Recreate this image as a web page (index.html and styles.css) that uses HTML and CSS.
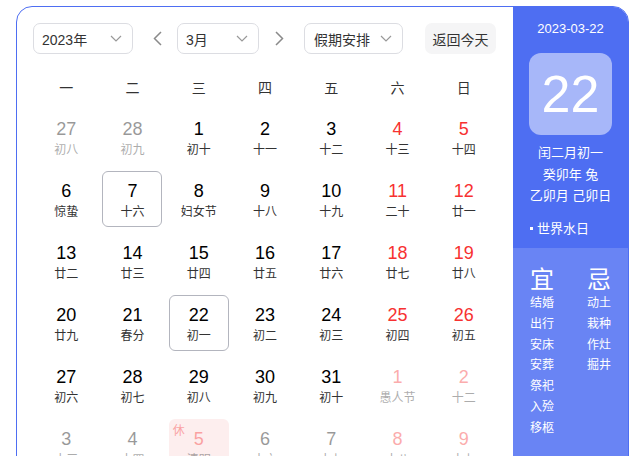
FILE: index.html
```html
<!DOCTYPE html>
<html lang="zh-CN">
<head>
<meta charset="utf-8">
<title>万年历</title>
<link rel="stylesheet" href="styles.css">
</head>
<body>
<div class="calendar">
  <div class="main">
    <div class="toolbar">
      <div class="select year"><span>2023年</span><svg class="chev" width="12" height="7" viewBox="0 0 12 7"><path d="M1 1l5 5 5-5"/></svg></div>
      <button class="arrow prev"><svg width="9" height="15" viewBox="0 0 9 15"><path d="M8 1L1.5 7.5 8 14"/></svg></button>
      <div class="select month"><span>3月</span><svg class="chev" width="12" height="7" viewBox="0 0 12 7"><path d="M1 1l5 5 5-5"/></svg></div>
      <button class="arrow next"><svg width="9" height="15" viewBox="0 0 9 15"><path d="M1 1l6.5 6.5L1 14"/></svg></button>
      <div class="select holiday"><span>假期安排</span><svg class="chev" width="12" height="7" viewBox="0 0 12 7"><path d="M1 1l5 5 5-5"/></svg></div>
      <button class="today-btn">返回今天</button>
    </div>
    <div class="weekdays">
      <span>一</span><span>二</span><span>三</span><span>四</span><span>五</span><span>六</span><span>日</span>
    </div>
    <div class="days">
      <div class="day out"><span class="num">27</span><span class="lunar">初八</span></div>
      <div class="day out"><span class="num">28</span><span class="lunar">初九</span></div>
      <div class="day"><span class="num">1</span><span class="lunar">初十</span></div>
      <div class="day"><span class="num">2</span><span class="lunar">十一</span></div>
      <div class="day"><span class="num">3</span><span class="lunar">十二</span></div>
      <div class="day weekend"><span class="num">4</span><span class="lunar">十三</span></div>
      <div class="day weekend"><span class="num">5</span><span class="lunar">十四</span></div>

      <div class="day"><span class="num">6</span><span class="lunar">惊蛰</span></div>
      <div class="day selected"><span class="num">7</span><span class="lunar">十六</span></div>
      <div class="day"><span class="num">8</span><span class="lunar">妇女节</span></div>
      <div class="day"><span class="num">9</span><span class="lunar">十八</span></div>
      <div class="day"><span class="num">10</span><span class="lunar">十九</span></div>
      <div class="day weekend"><span class="num">11</span><span class="lunar">二十</span></div>
      <div class="day weekend"><span class="num">12</span><span class="lunar">廿一</span></div>

      <div class="day"><span class="num">13</span><span class="lunar">廿二</span></div>
      <div class="day"><span class="num">14</span><span class="lunar">廿三</span></div>
      <div class="day"><span class="num">15</span><span class="lunar">廿四</span></div>
      <div class="day"><span class="num">16</span><span class="lunar">廿五</span></div>
      <div class="day"><span class="num">17</span><span class="lunar">廿六</span></div>
      <div class="day weekend"><span class="num">18</span><span class="lunar">廿七</span></div>
      <div class="day weekend"><span class="num">19</span><span class="lunar">廿八</span></div>

      <div class="day"><span class="num">20</span><span class="lunar">廿九</span></div>
      <div class="day"><span class="num">21</span><span class="lunar">春分</span></div>
      <div class="day selected"><span class="num">22</span><span class="lunar">初一</span></div>
      <div class="day"><span class="num">23</span><span class="lunar">初二</span></div>
      <div class="day"><span class="num">24</span><span class="lunar">初三</span></div>
      <div class="day weekend"><span class="num">25</span><span class="lunar">初四</span></div>
      <div class="day weekend"><span class="num">26</span><span class="lunar">初五</span></div>

      <div class="day"><span class="num">27</span><span class="lunar">初六</span></div>
      <div class="day"><span class="num">28</span><span class="lunar">初七</span></div>
      <div class="day"><span class="num">29</span><span class="lunar">初八</span></div>
      <div class="day"><span class="num">30</span><span class="lunar">初九</span></div>
      <div class="day"><span class="num">31</span><span class="lunar">初十</span></div>
      <div class="day out weekend"><span class="num">1</span><span class="lunar">愚人节</span></div>
      <div class="day out weekend"><span class="num">2</span><span class="lunar">十二</span></div>

      <div class="day out"><span class="num">3</span><span class="lunar">十三</span></div>
      <div class="day out"><span class="num">4</span><span class="lunar">十四</span></div>
      <div class="day out weekend rest"><span class="tag">休</span><span class="num">5</span><span class="lunar">清明</span></div>
      <div class="day out"><span class="num">6</span><span class="lunar">十六</span></div>
      <div class="day out"><span class="num">7</span><span class="lunar">十七</span></div>
      <div class="day out weekend"><span class="num">8</span><span class="lunar">十八</span></div>
      <div class="day out weekend"><span class="num">9</span><span class="lunar">十九</span></div>
    </div>
  </div>
  <aside class="side">
    <div class="side-top">
      <div class="side-date">2023-03-22</div>
      <div class="big-day">22</div>
      <div class="lunar-info">
        <div>闰二月初一</div>
        <div>癸卯年 兔</div>
        <div>乙卯月 己卯日</div>
      </div>
      <div class="festival">世界水日</div>
    </div>
    <div class="side-bottom">
      <div class="col">
        <div class="col-head">宜</div>
        <div>结婚</div><div>出行</div><div>安床</div><div>安葬</div><div>祭祀</div><div>入殓</div><div>移柩</div>
      </div>
      <div class="col">
        <div class="col-head">忌</div>
        <div>动土</div><div>栽种</div><div>作灶</div><div>掘井</div>
      </div>
    </div>
  </aside>
</div>
</body>
</html>
```

FILE: styles.css
```css
html, body {
  margin: 0;
  padding: 0;
  overflow: hidden;
  background: #fff;
}
body {
  font-family: "Liberation Sans", "Noto Sans CJK SC", sans-serif;
  color: #333;
}
.calendar {
  margin: 6px 0 0 16px;
  width: 611px;
  height: 500px;
  border: 1px solid #4e6ef2;
  border-radius: 16px;
  overflow: hidden;
  display: flex;
  box-sizing: content-box;
}
.main {
  width: 464px;
  padding: 16px 16px 0 16px;
  flex: none;
}
.toolbar {
  display: flex;
  align-items: center;
  height: 31px;
}
.select {
  box-sizing: border-box;
  height: 31px;
  border: 1px solid #dcdde2;
  border-radius: 7px;
  display: flex;
  align-items: center;
  justify-content: space-between;
  padding: 0 10px 0 8px;
  font-size: 14px;
  color: #333;
  flex: none;
}
.select.year { width: 100px; }
.select.month { width: 82px; }
.select.holiday { width: 99px; padding-left: 9px; }
.chev path {
  fill: none;
  stroke: #999;
  stroke-width: 1.2;
}
.arrow {
  flex: none;
  border: 0;
  background: none;
  padding: 0;
  height: 31px;
  display: flex;
  align-items: center;
}
.arrow path {
  fill: none;
  stroke: #8a8a8a;
  stroke-width: 1.5;
}
.arrow.prev { width: 44px; justify-content: flex-end; padding-right: 15px; box-sizing: border-box; }
.arrow.next { width: 45px; justify-content: flex-start; padding-left: 16px; box-sizing: border-box; }
.today-btn {
  flex: none;
  margin-left: 22px;
  width: 71px;
  height: 31px;
  border: 0;
  border-radius: 7px;
  background: #f5f5f6;
  font-family: inherit;
  font-size: 14px;
  color: #333;
  padding: 0;
}
.weekdays {
  display: grid;
  grid-template-columns: repeat(7, 1fr);
  margin-top: 24px;
  margin-bottom: 11px;
  font-size: 14px;
  line-height: 20px;
  text-align: center;
  color: #333;
}
.days {
  display: grid;
  grid-template-columns: repeat(7, 1fr);
  row-gap: 6px;
}
.day {
  justify-self: center;
  position: relative;
  box-sizing: border-box;
  width: 60px;
  height: 56px;
  padding-top: 10px;
  border-radius: 6px;
  display: flex;
  flex-direction: column;
  align-items: center;
}
.day.selected {
  border: 1px solid #b3b5be;
  padding-top: 9px;
}
.num {
  font-size: 18px;
  line-height: 20px;
  color: #000;
}
.lunar {
  margin-top: 3px;
  font-size: 12px;
  line-height: 16px;
  color: #333;
  white-space: nowrap;
}
.weekend .num { color: #f73131; }
.out .num, .out .lunar, .out .tag { opacity: 0.4; }
.rest { background: #fdeeee; }
.tag {
  position: absolute;
  left: 4px;
  top: 5px;
  font-size: 12px;
  line-height: 14px;
  color: #f73131;
}
.side {
  flex: none;
  width: 115px;
  display: flex;
  flex-direction: column;
  color: #fff;
}
.side-top {
  background: #4e6ef2;
  height: 241px;
  box-sizing: border-box;
  padding-top: 13px;
  display: flex;
  flex-direction: column;
  align-items: center;
}
.side-date {
  font-size: 13px;
  line-height: 17px;
}
.big-day {
  margin-top: 16px;
  width: 83px;
  height: 82px;
  border-radius: 12px;
  background: rgba(255, 255, 255, 0.5);
  font-size: 52px;
  line-height: 82px;
  text-align: center;
}
.lunar-info {
  margin-top: 7px;
  font-size: 13px;
  line-height: 21.5px;
  text-align: center;
}
.festival {
  align-self: flex-start;
  margin-top: 11px;
  padding-left: 17px;
  font-size: 13px;
  line-height: 21.5px;
  display: flex;
  align-items: center;
}
.festival::before {
  content: "";
  width: 3px;
  height: 3px;
  background: #fff;
  margin-right: 4px;
}
.side-bottom {
  flex: 1;
  background: #6984f4;
  padding: 19px 0 0 17px;
  display: flex;
  gap: 33px;
  font-size: 12px;
  line-height: 20.8px;
}
.col {
  display: flex;
  flex-direction: column;
}
.col-head {
  font-size: 24px;
  line-height: 26px;
}
```
